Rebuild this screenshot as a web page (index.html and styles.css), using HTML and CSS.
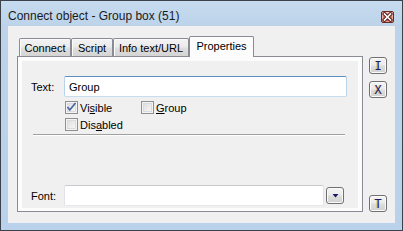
FILE: index.html
```
<!DOCTYPE html>
<html>
<head>
<meta charset="utf-8">
<link rel="stylesheet" href="styles.css">
</head>
<body>
<div class="window">
  <div class="titlebar">
    <span class="title">Connect object - Group box (51)</span>
    <span class="close"><svg width="11" height="10" viewBox="0 0 11 10"><path d="M2.5 2 L8.5 8 M8.5 2 L2.5 8" stroke="#5a1d16" stroke-width="3.6" stroke-linecap="square"/><path d="M2.5 2 L8.5 8 M8.5 2 L2.5 8" stroke="#ffffff" stroke-width="1.6" stroke-linecap="square"/></svg></span>
  </div>
  <div class="client">
    <div class="main">
      <div class="tabs">
        <div class="tab tab-connect">Connect</div>
        <div class="tab tab-script">Script</div>
        <div class="tab tab-info">Info text/URL</div>
        <div class="tab tab-props selected">Properties</div>
      </div>
      <div class="panel">
        <div class="page">
          <div class="row row-text">
            <span class="label">Text:</span>
            <input class="field field-active" type="text" value="Group" readonly>
          </div>
          <div class="checks">
            <label class="check col1"><span class="cb"><svg width="11" height="11" viewBox="0 0 11 11"><path d="M1.5 5 L3.8 8 L9.5 1" stroke="#4a64a4" stroke-width="1.7" fill="none"/></svg></span><span>Vi<u>s</u>ible</span></label>
            <label class="check"><span class="cb"></span><span><u>G</u>roup</span></label>
            <label class="check col1"><span class="cb"></span><span>Dis<u>a</u>bled</span></label>
          </div>
          <div class="separator"></div>
          <div class="row row-font">
            <span class="label">Font:</span>
            <input class="field field-font" type="text" value="" readonly>
            <span class="dropbtn"><svg width="7" height="4" viewBox="0 0 7 4"><path d="M0.5 0 L6.5 0 L3.5 3.5 Z" fill="#141a5c"/></svg></span>
          </div>
        </div>
      </div>
    </div>
    <div class="side">
      <span class="sbtn">I</span>
      <span class="sbtn sbtn-x">X</span>
      <span class="sbtn sbtn-t">T</span>
    </div>
  </div>
</div>
</body>
</html>
```
FILE: styles.css
```
html, body {
  margin: 0;
  padding: 0;
}
body {
  width: 403px;
  height: 231px;
  overflow: hidden;
  font-family: "Liberation Sans", Arial, sans-serif;
  font-size: 11px;
  color: #000;
}
.window {
  width: 403px;
  height: 231px;
  box-sizing: border-box;
  border: 1px solid #3c4249;
  background: linear-gradient(to bottom, #c7dbef 0px, #bcd3ea 25px, #b9d1ea 100%);
  padding: 0 7px 7px 7px;
  display: flex;
  flex-direction: column;
}
.titlebar {
  height: 25px;
  flex: none;
  display: flex;
  justify-content: space-between;
  align-items: flex-start;
  margin-right: 1px;
}
.title {
  font-size: 12px;
  line-height: 14px;
  margin-top: 8px;
  margin-left: 0px;
  color: #1a1a1a;
}
.close {
  margin-top: 10px;
  width: 13px;
  height: 12px;
  box-sizing: border-box;
  border: 1px solid #6b2a22;
  border-radius: 2px;
  background: linear-gradient(to bottom, #eaa89c 0%, #d9786a 50%, #c4503f 100%);
  box-shadow: inset 0 0 0 1px rgba(255, 220, 210, 0.5);
  display: flex;
  align-items: center;
  justify-content: center;
}
.close svg { display: block; }
.client {
  flex: 1;
  background: #f0f0f0;
  display: flex;
  padding: 10px 8px 11px 9px;
  gap: 6px;
}
.main {
  width: 346px;
  display: flex;
  flex-direction: column;
}
.tabs {
  height: 20px;
  display: flex;
  align-items: flex-end;
  padding-left: 2px;
  position: relative;
  z-index: 1;
}
.tab {
  height: 18px;
  box-sizing: border-box;
  border: 1px solid #898c95;
  border-bottom: none;
  border-radius: 2px 2px 0 0;
  background: linear-gradient(to bottom, #f3f3f3 0%, #ebebeb 45%, #dedede 55%, #d4d4d4 100%);
  box-shadow: inset 1px 1px 0 #fbfbfb;
  display: flex;
  align-items: center;
  justify-content: center;
  padding-top: 1px;
  color: #000;
}
.tab-connect { width: 52px; }
.tab-script { width: 42px; }
.tab-info { width: 76px; }
.tab-props { width: 65px; }
.tab.selected {
  height: 21px;
  margin-bottom: -1px;
  background: #fcfcfc;
  box-shadow: none;
  padding-top: 0;
  padding-bottom: 3px;
}
.panel {
  height: 156px;
  box-sizing: border-box;
  border: 1px solid #898c95;
  background: #fcfcfc;
  padding: 4px 4px 3px 4px;
}
.page {
  height: 100%;
  background: #f0f0f0;
  box-sizing: border-box;
  padding: 15px 11px 2px 9px;
  display: flex;
  flex-direction: column;
}
.row {
  display: flex;
  align-items: center;
}
.label {
  width: 33px;
  flex: none;
}
.field {
  height: 21px;
  box-sizing: border-box;
  margin: 0;
  padding: 0 4px;
  font-family: "Liberation Sans", Arial, sans-serif;
  font-size: 11px;
  color: #000;
  background: #fff;
  border: 1px solid;
  border-radius: 2px;
  outline: none;
}
.field-active {
  flex: 1;
  min-width: 0;
  border-color: #5b8fc0 #b7d2ea #c8dcee #b7d2ea;
}
.field-font {
  width: 260px;
  border-color: #c9cbcf #e2e3e8 #e6e8ec #e2e3e8;
}
.dropbtn {
  margin-left: 2px;
  width: 18px;
  height: 17px;
  box-sizing: border-box;
  border: 1px solid #707070;
  border-radius: 3px;
  background: linear-gradient(to bottom, #f4f4f4 0%, #ebebeb 45%, #dddddd 55%, #d0d0d0 100%);
  box-shadow: inset 0 0 0 1px #fbfbfb;
  display: flex;
  align-items: center;
  justify-content: center;
  padding-top: 1px;
}
.dropbtn svg { display: block; }
.checks {
  margin-top: 4px;
  margin-left: 34px;
  display: grid;
  grid-template-columns: 76px auto;
  row-gap: 4px;
}
.check {
  display: flex;
  align-items: center;
  height: 13px;
  gap: 2px;
}
.check u { text-decoration: underline; }
.cb {
  width: 13px;
  height: 13px;
  box-sizing: border-box;
  border: 1px solid #8e8f8f;
  background: linear-gradient(135deg, #d6d8dc 0%, #eeeeee 60%, #fbfbfb 100%);
  box-shadow: inset 0 0 0 1px #f4f4f4, inset 0 0 0 2px #d9dbde;
  flex: none;
}
.cb svg { display: block; }
.col1 { grid-column: 1; }
.separator {
  margin: 3px 2px 0 2px;
  height: 0;
  border-top: 1px solid #a0a0a0;
  border-bottom: 1px solid #ffffff;
}
.row-font {
  margin-top: auto;
}
.side {
  display: flex;
  flex-direction: column;
  padding-top: 21px;
  padding-bottom: 0;
}
.sbtn {
  width: 18px;
  height: 17px;
  box-sizing: border-box;
  border: 1px solid #707070;
  border-radius: 3px;
  background: linear-gradient(to bottom, #f4f4f4 0%, #ebebeb 45%, #dddddd 55%, #d0d0d0 100%);
  box-shadow: inset 0 0 0 1px #fbfbfb;
  display: flex;
  align-items: center;
  justify-content: center;
  font-family: "DejaVu Sans Mono", monospace;
  font-size: 12px;
  line-height: 12px;
  color: #16206a;
  text-shadow: -1px 0 0 rgba(220, 160, 40, 0.55);
}
.sbtn-x { margin-top: 7px; }
.sbtn-t { margin-top: auto; }
```
